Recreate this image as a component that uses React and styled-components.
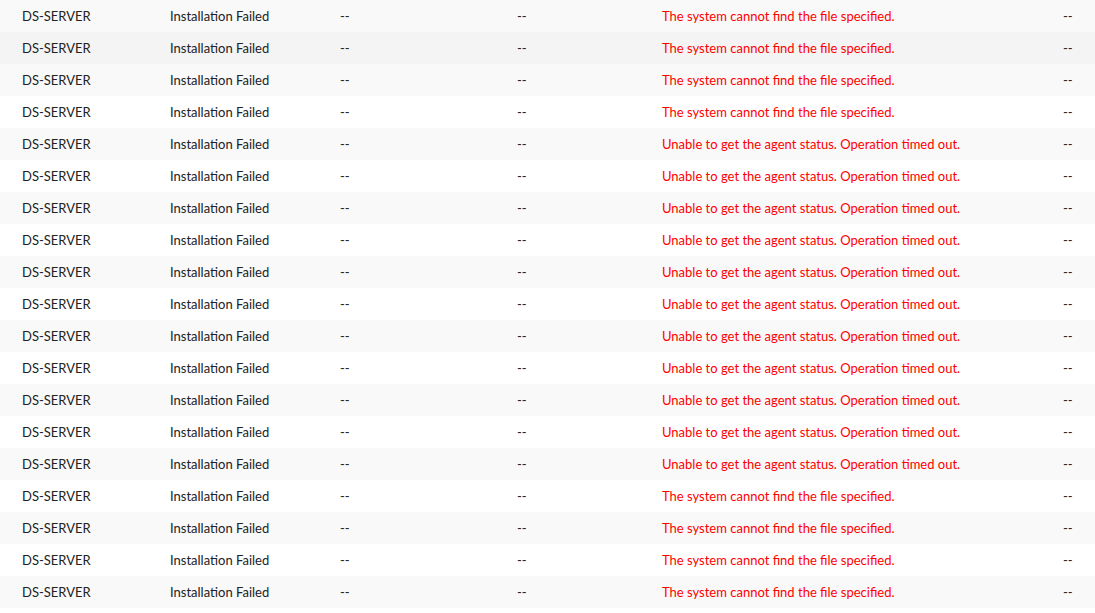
import React from "react";
import styled, { createGlobalStyle } from "styled-components";

const GlobalStyle = createGlobalStyle`
  body {
    margin: 0;
    background: #ffffff;
    font-family: Lato, "Open Sans", sans-serif;
  }
`;

const Table = styled.div`
  width: 100%;
  display: flex;
  flex-direction: column;
`;

const Row = styled.div`
  display: grid;
  grid-template-columns: 148px 170px 177px 145px 401px 1fr;
  height: 32px;
  align-items: center;
  background: ${(p) => (p.hover ? "#f4f4f4" : p.striped ? "#f9f9f9" : "#ffffff")};
`;

const Cell = styled.div`
  padding-left: 22px;
  font-size: 13px;
  color: ${(p) => (p.error ? "#ff0000" : "#222222")};
  white-space: nowrap;
  overflow: hidden;
`;

const NOT_FOUND = "The system cannot find the file specified.";
const TIMEOUT = "Unable to get the agent status. Operation timed out.";

const messages = [
  NOT_FOUND, NOT_FOUND, NOT_FOUND, NOT_FOUND,
  TIMEOUT, TIMEOUT, TIMEOUT, TIMEOUT, TIMEOUT, TIMEOUT,
  TIMEOUT, TIMEOUT, TIMEOUT, TIMEOUT, TIMEOUT,
  NOT_FOUND, NOT_FOUND, NOT_FOUND, NOT_FOUND,
];

const rows = messages.map((msg, i) => ({
  id: i,
  computer: "DS-SERVER",
  status: "Installation Failed",
  version: "--",
  time: "--",
  remarks: msg,
  extra: "--",
}));

export default function App() {
  return (
    <>
      <GlobalStyle />
      <Table>
        {rows.map((r, i) => (
          <Row key={r.id} striped={i % 2 === 0} hover={i === 1}>
            <Cell>{r.computer}</Cell>
            <Cell>{r.status}</Cell>
            <Cell>{r.version}</Cell>
            <Cell>{r.time}</Cell>
            <Cell error>{r.remarks}</Cell>
            <Cell>{r.extra}</Cell>
          </Row>
        ))}
      </Table>
    </>
  );
}
